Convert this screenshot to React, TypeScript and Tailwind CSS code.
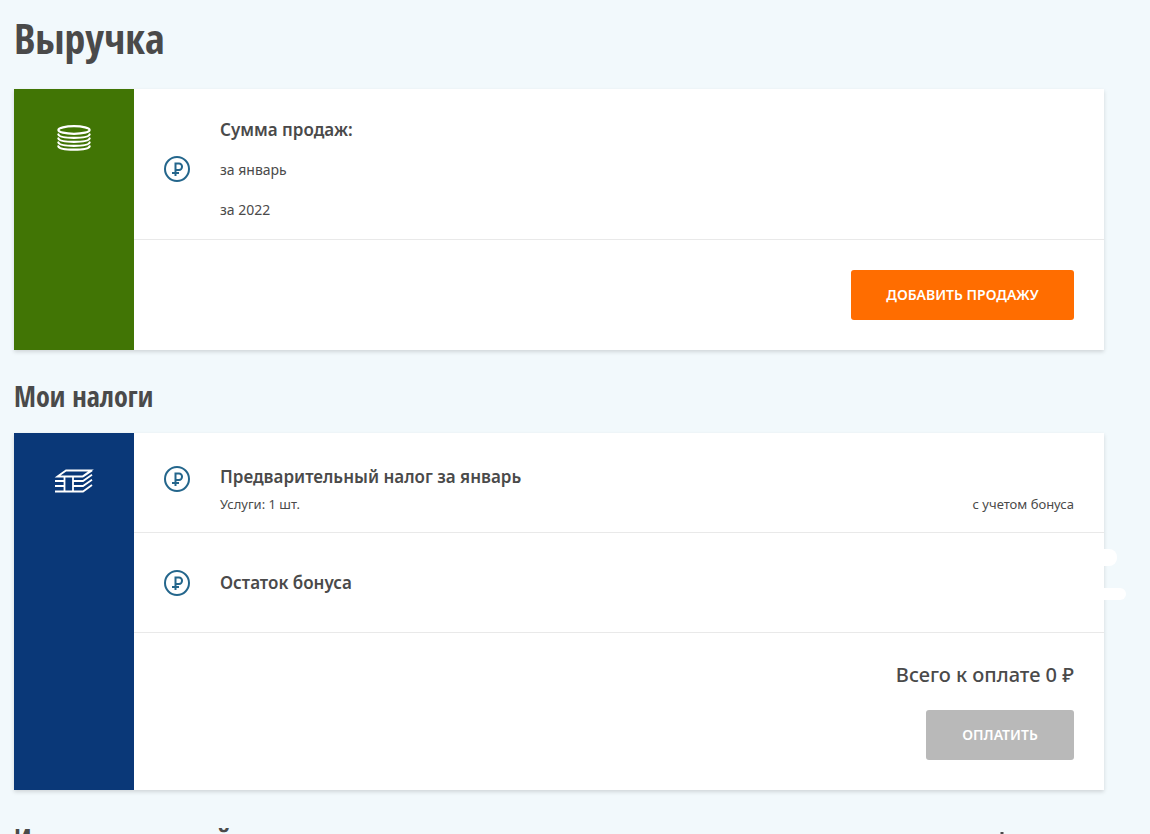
import type { ReactNode } from "react";

const RubleIcon = () => (
  <svg className="size-[26px] shrink-0" viewBox="0 0 26 26" fill="none" stroke="#24668c" aria-hidden="true">
    <circle cx="13" cy="13" r="12" strokeWidth="2" />
    <path d="M11.500 20V7.500h3.500a2.800 3 0 0 1 0 6.500h-3.500M8 17h7" strokeWidth="2" />
  </svg>
);

const CoinsIcon = () => (
  <svg className="h-[26px] w-[34px]" viewBox="0 0 34 26" fill="none" stroke="#fff" strokeWidth="2.2" strokeLinecap="round" aria-hidden="true">
    <ellipse cx="17" cy="5" rx="15.600" ry="3.800" />
    <path d="M1.400 9.500C3 14 31 14 32.600 9.500M1.400 13.500C3 18 31 18 32.600 13.500M1.400 17.500C3 22 31 22 32.600 17.500M1.400 21.300C3 25.800 31 25.800 32.600 21.300" />
  </svg>
);

const TaxIcon = () => (
  <svg className="h-[24px] w-[40px]" viewBox="0 0 40 24" fill="none" stroke="#fff" strokeWidth="1.800" aria-hidden="true">
    <path d="M3.500 7.500L12 1.500h25L28.500 7.500zM1 12h9M1 17h9M1 22.500h28l9-6.500M19 8v14.500M10.500 8v14.500M19 12h10l9-6.200M19 17h10l9-6.200M29 7.500l9-6" />
  </svg>
);

interface CardProps {
  color: string;
  icon: ReactNode;
  children: ReactNode;
}

const Card = ({ color, icon, children }: CardProps) => (
  <div className="flex bg-white shadow-[0_2px_4px_rgba(0,0,0,0.14)]">
    <div className={"flex w-[120px] shrink-0 justify-center pt-9 " + color}>{icon}</div>
    <div className="min-w-0 flex-1 divide-y divide-[#e9e9e9]">{children}</div>
  </div>
);

export default function App() {
  return (
    <main className="h-screen overflow-hidden bg-[#f2f9fc] pr-[46px] pl-[14px] font-['Noto_Sans','Open_Sans',sans-serif] text-[#4a4a4a]">
      <h1 className="pt-2 font-['Open_Sans_Condensed','Roboto_Condensed',sans-serif] text-[42px] leading-[60px] font-bold">
        Выручка
      </h1>
      <section className="mt-[21px]">
        <Card color="bg-[#417505]" icon={<CoinsIcon />}>
          <div className="flex h-[151px] items-center gap-[30px] px-[30px] pt-[10px]">
            <RubleIcon />
            <div className="pt-px">
              <h3 className="text-[17px] leading-[40px] font-semibold">Сумма продаж:</h3>
              <p className="text-sm leading-[40px]">за январь</p>
              <p className="text-sm leading-[40px]">за 2022</p>
            </div>
          </div>
          <div className="flex justify-end p-[30px]">
            <button className="h-[50px] w-[223px] rounded-[3px] bg-[#ff6d00] text-sm font-semibold text-white">
              ДОБАВИТЬ ПРОДАЖУ
            </button>
          </div>
        </Card>
      </section>

      <h2 className="mt-[26px] font-['Open_Sans_Condensed','Roboto_Condensed',sans-serif] text-[28px] leading-[40px] font-bold">
        Мои налоги
      </h2>
      <section className="mt-[17px]">
        <Card color="bg-[#0a3878]" icon={<TaxIcon />}>
          <div className="flex h-[100px] gap-[30px] px-[30px] pt-[30px]">
            <div className="pt-[3px]">
              <RubleIcon />
            </div>
            <div className="flex-1">
              <h3 className="text-[17px] leading-[28px] font-semibold">Предварительный налог за январь</h3>
              <div className="flex justify-between text-[13px] leading-[26px]">
                <span>Услуги: 1 шт.</span>
                <span>с учетом бонуса</span>
              </div>
            </div>
          </div>
          <div className="relative flex h-[100px] items-center gap-[30px] px-[30px]">
            <RubleIcon />
            <h3 className="text-[17px] leading-[28px] font-semibold">Остаток бонуса</h3>
            <span className="absolute top-4 -right-[13px] h-[17px] w-5 rounded-r-lg bg-white" />
            <span className="absolute top-[55px] -right-[22px] h-3 w-8 rounded-r-full bg-white" />
          </div>
          <div className="flex flex-col items-end px-[30px] pt-7 pb-[30px]">
            <p className="text-[20px] leading-[28px] font-medium">Всего к оплате 0 ₽</p>
            <button className="mt-[21px] h-[50px] w-[148px] rounded-[3px] bg-[#b9b9b9] text-sm font-semibold text-white">
              ОПЛАТИТЬ
            </button>
          </div>
        </Card>
      </section>

      <div className="mt-[29px] flex justify-between">
        <h2 className="font-['Open_Sans_Condensed','Roboto_Condensed',sans-serif] text-[28px] leading-[40px] font-bold">
          История операций
        </h2>
        <svg className="mt-3 mr-[90px] size-6" viewBox="0 0 24 24" fill="none" stroke="#4a4a4a" strokeWidth="3" aria-hidden="true">
          <path d="M12 1v16M5 11l7 7 7-7" />
        </svg>
      </div>
    </main>
  );
}
